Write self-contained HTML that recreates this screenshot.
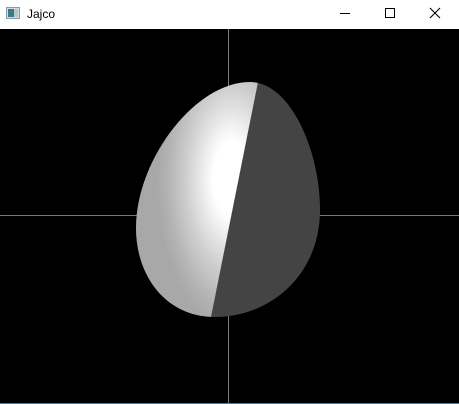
<!DOCTYPE html>
<html><head><style>
html,body{margin:0;padding:0;width:459px;height:404px;overflow:hidden;background:#fff;font-family:"Liberation Sans",sans-serif}
.tb{position:absolute;left:0;top:0;width:459px;height:29px;background:#fff}
.t{position:absolute;left:27px;top:7px;font-size:12px;color:#000}
</style></head><body>
<div class="tb">
<svg width="459" height="29" style="position:absolute;left:0;top:0">
<rect x="6.5" y="7.5" width="13" height="11" fill="#d8dde3" stroke="#8a9aa8"/>
<rect x="8" y="9" width="6" height="8" fill="#3a7a8a"/>
<rect x="14" y="9" width="4" height="8" fill="#b0c8d0"/>
<line x1="340" y1="13.5" x2="350" y2="13.5" stroke="#000"/>
<rect x="385.5" y="8.5" width="9" height="9" fill="none" stroke="#000"/>
<path d="M430 8 L440 18 M440 8 L430 18" stroke="#000" stroke-width="1.1"/>
</svg>
<div class="t">Jajco</div>
</div>
<svg width="459" height="375" style="position:absolute;left:0;top:29px">
<defs>
<radialGradient id="g" cx="232" cy="150" r="100" gradientUnits="userSpaceOnUse" gradientTransform="translate(232 150) scale(0.75 1.5) translate(-232 -150)">
<stop offset="0" stop-color="#ffffff"/>
<stop offset="0.25" stop-color="#ffffff"/>
<stop offset="0.6" stop-color="#d0d0d0"/>
<stop offset="0.85" stop-color="#b4b4b4"/>
<stop offset="1" stop-color="#a8a8a8"/>
</radialGradient>
<clipPath id="c"><path d="M250 53 C290 53 320 121 320 181 C320 246 270 288 215 288 C165 288 136 246 136 199 C136 131 195 53 250 53Z"/></clipPath>
</defs>
<rect width="459" height="375" fill="#000"/>
<line x1="228.5" y1="0" x2="228.5" y2="375" stroke="#777"/>
<line x1="0" y1="186.5" x2="459" y2="186.5" stroke="#777"/>
<g clip-path="url(#c)">
<rect width="459" height="375" fill="#444"/>
<path d="M0 0 L258 0 L258 53 L211 288 L211 375 L0 375 Z" fill="url(#g)"/>
</g>
<rect x="0" y="374" width="459" height="1" fill="#2b86c9"/>
</svg>
</body></html>
